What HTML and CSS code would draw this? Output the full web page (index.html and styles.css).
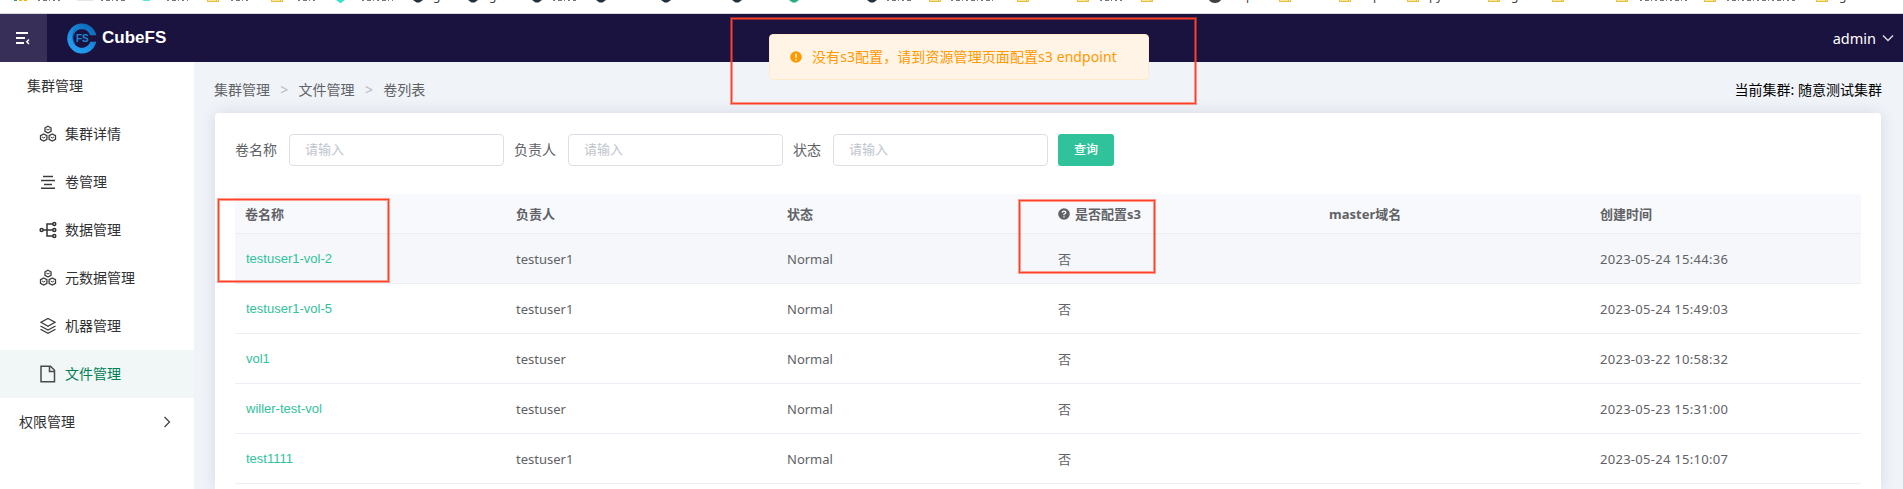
FILE: index.html
```html
<!DOCTYPE html>
<html lang="zh-CN">
<head>
<meta charset="utf-8">
<title>CubeFS</title>
<link rel="stylesheet" href="styles.css">
</head>
<body>
<svg width="0" height="0" class="defs">
  <symbol id="folder" viewBox="0 0 12 2"><path d="M0 0h12v2H0z" fill="#e6bf45"/><path d="M1 0h8v1H1zM10 0h1v1h-1z" fill="#ffe695"/></symbol>
  <symbol id="hex" viewBox="0 0 10 3"><path d="M0 0h10L6.500 2.600h-3z" fill="currentColor"/></symbol>
  <symbol id="cluster" viewBox="0 0 18 18"><g fill="none" stroke="#3c3c3c" stroke-width="1.300"><path d="M9 1.200l3 1.600v3.600L9 8 6 6.400V2.800zM4.700 9l3.200 1.700v3.700l-3.200 1.700-3.200-1.700v-3.700zM13.300 9l3.200 1.700v3.700l-3.200 1.700-3.200-1.700v-3.700z"/><path d="M7.300 4L9 5l1.700-1M3 12l1.700 1 1.700-1M11.600 12l1.700 1 1.700-1" stroke-width="1"/></g></symbol>
</svg>
<div class="bookmarks">
  <svg width="1903" height="13">
    <path d="M14 0h3v1h-3z" fill="#2f9e5b"/><path d="M19 0h3v1h-3zM24 0h3v1h-3z" fill="#f5b400"/>
    <path d="M77 0h16v1H77z" fill="#e6e6e6"/><path d="M142 0h9l-2 1h-5z" fill="#5fe0e0"/><path d="M336 0h9l-4 3h-1z" fill="#3de0cf"/>
    <g class="stubs">
      <path d="M38 .5h22"/><path d="M101 .5h24"/><path d="M167 .5h21"/><path d="M231 .5h17"/><path d="M298 .5h18"/><path d="M362 .5h31"/><path d="M553 .5h23"/><path d="M887 .5h24"/><path d="M951 .5h42"/><path d="M1100 .5h22"/><path d="M1640 .5h47"/><path d="M1727 .5h68"/>
    </g>
    <g class="hexes">
      <use href="#hex" x="413" y="0" width="10" height="3"/><use href="#hex" x="468" y="0" width="10" height="3"/><use href="#hex" x="532" y="0" width="10" height="3"/><use href="#hex" x="596" y="0" width="10" height="3"/><use href="#hex" x="661" y="0" width="10" height="3"/><use href="#hex" x="732" y="0" width="10" height="3"/><use href="#hex" x="867" y="0" width="10" height="3"/>
    </g>
    <use href="#hex" x="789" y="0" width="10" height="3" color="#27ae7d"/>
    <path d="M1209 0h12q-2 3-6 3t-6-3z" fill="#3c4043"/>
    <use href="#folder" x="207" width="12" height="2"/><use href="#folder" x="271" width="12" height="2"/><use href="#folder" x="929" width="12" height="2"/><use href="#folder" x="1017" width="12" height="2"/><use href="#folder" x="1077" width="12" height="2"/><use href="#folder" x="1141" width="12" height="2"/><use href="#folder" x="1279" width="12" height="2"/><use href="#folder" x="1339" width="12" height="2"/><use href="#folder" x="1407" width="12" height="2"/><use href="#folder" x="1488" width="12" height="2"/><use href="#folder" x="1552" width="12" height="2"/><use href="#folder" x="1616" width="12" height="2"/><use href="#folder" x="1704" width="12" height="2"/><use href="#folder" x="1816" width="12" height="2"/>
    <g class="marks"><text x="433" y="0">g</text><text x="489" y="0">g</text><text x="1246" y="0">p</text><text x="1373" y="0">p</text><text x="1429" y="0">py</text><text x="1511" y="0">g</text><text x="1839" y="0">g</text></g>
  </svg>
</div>
<header class="header">
  <div class="toggle"><svg width="16" height="14" viewBox="0 0 16 14"><path d="M1 2h12M1 7h9M1 12h8" stroke="#fff" stroke-width="2"/><path d="M14 8.500L11.800 10.700 14 13" fill="none" stroke="#fff" stroke-width="1.500"/></svg></div>
  <div class="brand">
    <svg width="30" height="31" viewBox="0 0 30 31">
      <defs><linearGradient id="ring" x1="0" y1="1" x2=".7" y2="0"><stop offset="0" stop-color="#2aa4f7"/><stop offset=".5" stop-color="#1c8fe3"/><stop offset="1" stop-color="#0d6ab5"/></linearGradient></defs>
      <path d="M29.300 12.300A14.700 15 0 1 0 29.300 18.700H23.300A9 9.300 0 1 1 23.300 12.300z" fill="url(#ring)"/>
      <path d="M9 6Q3 13 8 21" fill="none" stroke="#0c5fa6" stroke-width="1"/>
      <text x="15.300" y="19.300" class="ring-text">FS</text>
    </svg>
    <span class="name">CubeFS</span>
  </div>
  <div class="user"><span>admin</span><svg width="12" height="8" viewBox="0 0 12 8"><path d="M1 1.500l5 5 5-5" fill="none" stroke="#e4e2ea" stroke-width="1.300"/></svg></div>
</header>
<div class="body">
  <nav class="side">
    <div class="group first">集群管理</div>
    <a class="item"><svg width="18" height="18"><use href="#cluster"/></svg>集群详情</a>
    <a class="item"><svg width="18" height="18" viewBox="0 0 18 18"><path d="M4 3.500h10M2 7.500h14M5 11.500h8M2 15.300h14" stroke="#3c3c3c" stroke-width="1.500"/></svg>卷管理</a>
    <a class="item"><svg width="18" height="18" viewBox="0 0 18 18"><g fill="none" stroke="#333" stroke-width="1.500"><path d="M4 9h10M14 3H8v12h6"/><circle cx="2.600" cy="9" r="1.500"/><circle cx="15.300" cy="3" r="1.500"/><circle cx="15.300" cy="9" r="1.500"/><circle cx="15.300" cy="15" r="1.500"/></g></svg>数据管理</a>
    <a class="item"><svg width="18" height="18"><use href="#cluster"/></svg>元数据管理</a>
    <a class="item"><svg width="18" height="18" viewBox="0 0 18 18"><path d="M9 1.500l7 3.800-7 3.900-7-3.900zM1.500 9L9 13l7.500-4M1.500 12.300L9 16.300l7.500-4" fill="none" stroke="#3c3c3c" stroke-width="1.300"/></svg>机器管理</a>
    <a class="item active"><svg width="18" height="18" viewBox="0 0 18 18"><path d="M2 1.200h9.500l4 4v11.600H2zM10.500 1.500v5h5" fill="none" stroke="#4a4a4a" stroke-width="1.500"/></svg>文件管理</a>
    <div class="group">权限管理<svg width="8" height="12" viewBox="0 0 8 12"><path d="M1.500 1l5 5-5 5" fill="none" stroke="#444" stroke-width="1.300"/></svg></div>
  </nav>
  <main class="main">
    <div class="crumbs">
      <div class="path"><span>集群管理</span><i>&gt;</i><span>文件管理</span><i>&gt;</i><span>卷列表</span></div>
      <div class="current">当前集群: 随意测试集群</div>
    </div>
    <section class="card">
      <form class="search">
        <label>卷名称</label><input placeholder="请输入">
        <label>负责人</label><input placeholder="请输入">
        <label>状态</label><input placeholder="请输入">
        <button type="button">查询</button>
      </form>
      <table class="table">
        <thead><tr><th>卷名称</th><th>负责人</th><th>状态</th><th><svg class="help" width="12" height="12" viewBox="0 0 12 12"><circle cx="6" cy="6" r="5.800" fill="#606266"/><path d="M4.200 4.800q0-1.700 1.800-1.700t1.800 1.500Q7.800 5.500 6 6.200v1M6 8.300v1.300" fill="none" stroke="#fff" stroke-width="1.200"/></svg>是否配置s3</th><th>master域名</th><th>创建时间</th></tr></thead>
        <tbody>
          <tr class="hover"><td><a>testuser1-vol-2</a></td><td>testuser1</td><td>Normal</td><td>否</td><td></td><td class="time">2023-05-24 15:44:36</td></tr>
          <tr><td><a>testuser1-vol-5</a></td><td>testuser1</td><td>Normal</td><td>否</td><td></td><td class="time">2023-05-24 15:49:03</td></tr>
          <tr><td><a>vol1</a></td><td>testuser</td><td>Normal</td><td>否</td><td></td><td class="time">2023-03-22 10:58:32</td></tr>
          <tr><td><a>willer-test-vol</a></td><td>testuser</td><td>Normal</td><td>否</td><td></td><td class="time">2023-05-23 15:31:00</td></tr>
          <tr><td><a>test1111</a></td><td>testuser1</td><td>Normal</td><td>否</td><td></td><td class="time">2023-05-24 15:10:07</td></tr>
        </tbody>
      </table>
    </section>
  </main>
</div>
<div class="message"><svg width="12" height="12" viewBox="0 0 12 12"><circle cx="6" cy="6" r="5.800" fill="#ff9900"/><path d="M6 2.500v4.300M6 8.200v1.500" stroke="#fff4e6" stroke-width="1.500"/></svg><span>没有s3配置，请到资源管理页面配置s3 endpoint</span></div>
<div class="frame frame-message"></div>
<div class="frame frame-volume"></div>
<div class="frame frame-s3"></div>
</body>
</html>
```
FILE: styles.css
```css
* { box-sizing: border-box; }
body {
  margin: 0;
  height: 489px;
  overflow: hidden;
  position: relative;
  display: flex;
  flex-direction: column;
  background: #f0f3f8;
  color: #606266;
  font: 14px/20px "Noto Sans", "Noto Sans CJK SC", sans-serif;
}
svg { display: block; flex: none; }
.defs { position: absolute; }
.bookmarks { height: 14px; flex: none; background: #fff; border-bottom: 1px solid #d6d6dc; }
.stubs { stroke: #77777c; stroke-width: 1; stroke-dasharray: 2 3 4 2 1 3; }
.hexes { color: #20313d; }
.marks { font-size: 12px; fill: #3c4043; }

.header { height: 48px; flex: none; display: flex; align-items: center; background: #1a133f; color: #fff; }
.toggle { width: 47px; height: 48px; display: flex; align-items: center; padding-left: 15px; background: #372f57; }
.brand { display: flex; align-items: center; gap: 5px; margin-left: 20px; }
.ring-text { font: bold 10px "Liberation Sans", sans-serif; fill: #1c86d6; text-anchor: middle; }
.name { font: bold 17px/24px "Liberation Sans", sans-serif; }
.user { margin: 0 9px 0 auto; display: flex; align-items: center; gap: 6px; font-size: 14.5px; line-height: 20px; padding-bottom: 1px; }

.body { flex: 1; min-height: 0; display: flex; overflow: hidden; }
.side { width: 194px; flex: none; background: #fff; color: #303133; }
.group, .item { height: 48px; display: flex; align-items: center; }
.group { padding: 0 23px 0 19px; justify-content: space-between; }
.group.first { padding-left: 27px; }
.item { padding-left: 39px; gap: 8px; }
.item.active { background: #f1f7f6; color: #008055; }

.main { flex: 1; padding: 18px 22px 0 21px; display: flex; flex-direction: column; min-width: 0; }
.crumbs { height: 20px; flex: none; display: flex; justify-content: space-between; margin-bottom: 13px; }
.path { display: flex; gap: 10.300px; margin-left: -1px; }
.path i { font-style: normal; color: #b4b8c0; }
.current { color: #000; margin-right: -1px; }
.card { flex: 1; min-height: 0; padding: 21px 20px 0; background: #fff; border-radius: 4px 4px 0 0; box-shadow: 0 0 16px rgba(30, 40, 70, .12); }
.search { display: flex; align-items: center; height: 32px; margin-bottom: 28px; }
.search input {
  width: 215px; height: 32px; margin: 0 10px 0 12px; padding: 0 15px 2px;
  border: 1px solid #dcdfe6; border-radius: 4px; background: #fff; font: inherit; font-size: 13px;
}
.search label { padding-bottom: 1px; }
.search input::placeholder { color: #c0c4cc; }
.search button { width: 56px; height: 32px; padding: 0; border: 0; border-radius: 3px; background: #30c29b; color: #fff; font: 500 12px/20px "Noto Sans", "Noto Sans CJK SC", sans-serif; }

.table { width: 1626px; table-layout: fixed; border-collapse: separate; border-spacing: 0; font-size: 13px; }
.table th, .table td { padding: 0 10px; text-align: left; border-bottom: 1px solid #ebeef5; }
.table th { height: 40px; background: #f8f9fc; font-weight: bold; }
.table td { height: 50px; }
.table .hover td { background: #f5f7fa; }
.table a { color: #30c29b; font-family: "Liberation Sans", sans-serif; padding-left: 1px; }
.table .time { letter-spacing: .28px; }
.help { display: inline-block; vertical-align: -1px; margin-right: 5px; }

.message {
  position: absolute; left: 769px; top: 34px; width: 380px; height: 46px; padding-left: 20px;
  display: flex; align-items: center; gap: 10px; letter-spacing: .08px;
  background: #fff4e6; border: 1px solid #ffebcc; border-radius: 4px; color: #ff9900; white-space: nowrap;
}
.frame { position: absolute; border: 1px solid #ff4025; box-shadow: 0 0 0 1px rgba(255, 64, 37, .5), inset 0 0 0 1px rgba(255, 64, 37, .5); }
.frame-message { left: 731px; top: 18px; width: 465px; height: 86px; }
.frame-volume { left: 218px; top: 199px; width: 171px; height: 83px; }
.frame-s3 { left: 1019px; top: 200px; width: 136px; height: 73px; }
```
